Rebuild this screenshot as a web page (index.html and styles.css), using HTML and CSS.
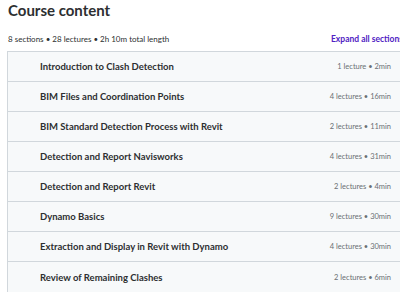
FILE: index.html
```html
<!DOCTYPE html>
<html lang="en">
<head>
    <meta charset="UTF-8">
    <meta name="viewport" content="width=device-width, initial-scale=1.0">
    <title>Course content</title>
    <link rel="stylesheet" href="styles.css">
</head>
<body>
    <div class="curriculum">
        <h2 class="curriculum-title">Course content</h2>
        <div class="curriculum-meta">
            <span>8 sections • 28 lectures • 2h 10m total length</span>
            <button class="expand-btn">Expand all sections</button>
        </div>
        <div class="section-list">
            <div class="section-row">
                <span class="section-name">Introduction to Clash Detection</span>
                <span class="section-info">1 lecture • 2min</span>
            </div>
            <div class="section-row">
                <span class="section-name">BIM Files and Coordination Points</span>
                <span class="section-info">4 lectures • 16min</span>
            </div>
            <div class="section-row">
                <span class="section-name">BIM Standard Detection Process with Revit</span>
                <span class="section-info">2 lectures • 11min</span>
            </div>
            <div class="section-row">
                <span class="section-name">Detection and Report Navisworks</span>
                <span class="section-info">4 lectures • 31min</span>
            </div>
            <div class="section-row">
                <span class="section-name">Detection and Report Revit</span>
                <span class="section-info">2 lectures • 4min</span>
            </div>
            <div class="section-row">
                <span class="section-name">Dynamo Basics</span>
                <span class="section-info">9 lectures • 30min</span>
            </div>
            <div class="section-row">
                <span class="section-name">Extraction and Display in Revit with Dynamo</span>
                <span class="section-info">4 lectures • 30min</span>
            </div>
            <div class="section-row">
                <span class="section-name">Review of Remaining Clashes</span>
                <span class="section-info">2 lectures • 6min</span>
            </div>
        </div>
    </div>
</body>
</html>
```

FILE: styles.css
```css
* {
    margin: 0;
    padding: 0;
    box-sizing: border-box;
    font-family: Lato, 'Liberation Sans', sans-serif;
}

body {
    background-color: #fff;
    overflow: hidden;
    color: #2d2f31;
}

.curriculum {
    width: 416px;
    padding-left: 7px;
}

.curriculum-title {
    font-size: 15px;
    font-weight: 700;
    line-height: 20px;
    padding-left: 1px;
    margin-bottom: 12px;
}

.curriculum-meta {
    display: flex;
    justify-content: space-between;
    align-items: center;
    font-size: 8px;
    color: #2d2f31;
    height: 14px;
    padding: 0 13px 0 1px;
    margin-bottom: 5px;
}

.expand-btn {
    background: none;
    border: none;
    color: #5022c3;
    font-size: 8.5px;
    font-weight: 700;
    white-space: nowrap;
}

.section-list {
    border: 1px solid #d1d7dc;
    border-right: none;
}

.section-row {
    display: flex;
    justify-content: space-between;
    align-items: center;
    height: 30px;
    padding: 0 25px 0 32px;
    background-color: #f7f9fa;
    border-bottom: 1px solid #d1d7dc;
}

.section-row:last-child {
    border-bottom: none;
}

.section-name {
    font-size: 9.5px;
    font-weight: 700;
}

.section-info {
    font-size: 7.5px;
    color: #6a6f73;
}
```
